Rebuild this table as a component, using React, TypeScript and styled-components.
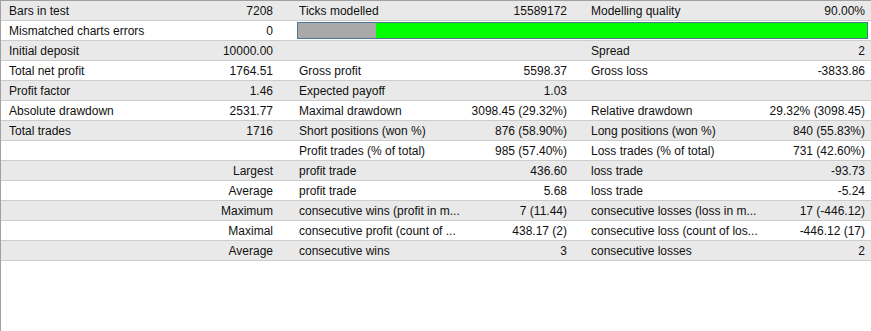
import React from 'react'
import styled, { createGlobalStyle } from 'styled-components'

const GlobalStyle = createGlobalStyle`
  html, body {
    margin: 0;
    padding: 0;
    background: #ffffff;
  }
  body {
    font-family: "Liberation Sans", Arial, sans-serif;
    font-size: 12px;
    color: #101010;
  }
`

type Cell = [string, string] | null

interface RowData {
    cells: [Cell, Cell, Cell]
    quality?: number
}

const rows: RowData[] = [
    { cells: [['Bars in test', '7208'], ['Ticks modelled', '15589172'], ['Modelling quality', '90.00%']] },
    { cells: [['Mismatched charts errors', '0'], null, null], quality: 90 },
    { cells: [['Initial deposit', '10000.00'], null, ['Spread', '2']] },
    { cells: [['Total net profit', '1764.51'], ['Gross profit', '5598.37'], ['Gross loss', '-3833.86']] },
    { cells: [['Profit factor', '1.46'], ['Expected payoff', '1.03'], null] },
    { cells: [['Absolute drawdown', '2531.77'], ['Maximal drawdown', '3098.45 (29.32%)'], ['Relative drawdown', '29.32% (3098.45)']] },
    { cells: [['Total trades', '1716'], ['Short positions (won %)', '876 (58.90%)'], ['Long positions (won %)', '840 (55.83%)']] },
    { cells: [null, ['Profit trades (% of total)', '985 (57.40%)'], ['Loss trades (% of total)', '731 (42.60%)']] },
    { cells: [['', 'Largest'], ['profit trade', '436.60'], ['loss trade', '-93.73']] },
    { cells: [['', 'Average'], ['profit trade', '5.68'], ['loss trade', '-5.24']] },
    { cells: [['', 'Maximum'], ['consecutive wins (profit in m...', '7 (11.44)'], ['consecutive losses (loss in m...', '17 (-446.12)']] },
    { cells: [['', 'Maximal'], ['consecutive profit (count of ...', '438.17 (2)'], ['consecutive loss (count of los...', '-446.12 (17)']] },
    { cells: [['', 'Average'], ['consecutive wins', '3'], ['consecutive losses', '2']] },
]

const valuePad = [18, 16, 6]

const Panel = styled.div`
  width: 871px;
  height: 331px;
  box-sizing: border-box;
  border-top: 1px solid #a0a0a0;
  border-left: 1px solid #a0a0a0;
  background: #ffffff;
  overflow: hidden;
`

const Row = styled.div<{ $shaded: boolean }>`
  display: grid;
  grid-template-columns: 149px 141px 177px 115px 181px 1fr;
  height: 19px;
  border-bottom: 1px solid #cdcdcd;
  background: ${p => (p.$shaded ? '#e9e9e9' : '#ffffff')};
`

const Label = styled.div`
  padding-left: 8px;
  height: 19px;
  line-height: 21px;
  white-space: nowrap;
  overflow: hidden;
`

const Value = styled.div<{ $pad: number }>`
  padding-right: ${p => p.$pad}px;
  height: 19px;
  line-height: 21px;
  text-align: right;
  white-space: nowrap;
  overflow: hidden;
`

const BarCell = styled.div`
  grid-column: 3 / 7;
  display: flex;
  align-items: center;
  padding: 0 3px 0 6px;
`

const QualityBar = styled.div`
  flex: 1;
  height: 15px;
  border: 1px solid #4f7592;
  background: #00ff00;
  display: flex;
`

const QualityEmpty = styled.div`
  background: #a9a9a9;
  height: 100%;
`

function Quality({ value }: { value: number }) {
    return (
        <BarCell>
            <QualityBar>
                <QualityEmpty style={{ width: `${(100 - value) * 1.37}%` }} />
            </QualityBar>
        </BarCell>
    )
}

function StatRow({ row, index }: { row: RowData; index: number }) {
    const shown = row.quality !== undefined ? row.cells.slice(0, 1) : row.cells
    return (
        <Row $shaded={index % 2 === 0}>
            {shown.map((cell, i) => (
                <React.Fragment key={i}>
                    <Label>{cell ? cell[0] : ''}</Label>
                    <Value $pad={valuePad[i]}>{cell ? cell[1] : ''}</Value>
                </React.Fragment>
            ))}
            {row.quality !== undefined ? <Quality value={row.quality} /> : null}
        </Row>
    )
}

export default function App() {
    return (
        <>
            <GlobalStyle />
            <Panel>
                {rows.map((row, i) => (
                    <StatRow key={i} row={row} index={i} />
                ))}
            </Panel>
        </>
    )
}
